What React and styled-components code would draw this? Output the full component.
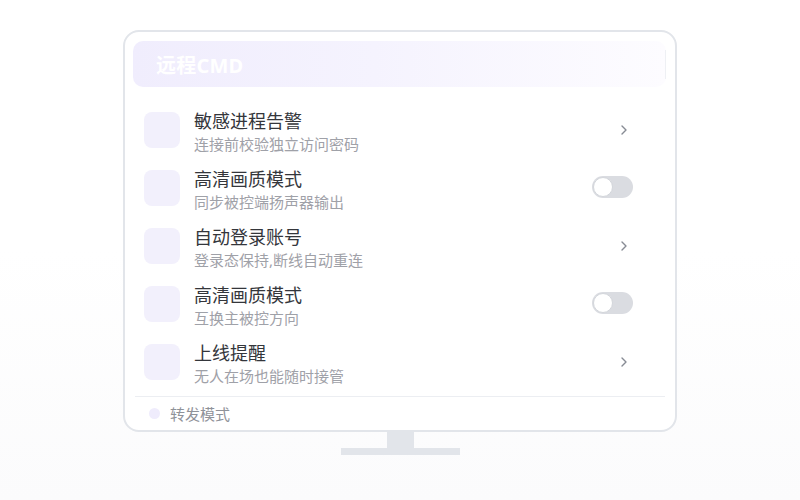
import styled, { createGlobalStyle } from "styled-components";

const GlobalStyle = createGlobalStyle`
  html, body {
    margin: 0;
    padding: 0;
  }
  body {
    font-family: "Noto Sans", "Noto Sans CJK SC", sans-serif;
    background: linear-gradient(180deg, #ffffff 0%, #ffffff 50%, #fbfbfc 100%);
    min-height: 500px;
  }
`;

const Page = styled.div`
  display: flex;
  flex-direction: column;
  align-items: center;
  padding-top: 30px;
  height: 470px;
`;

const Monitor = styled.div`
  width: 554px;
  box-sizing: border-box;
  border: 2px solid #e2e5ea;
  border-radius: 16px;
  background: #ffffff;
  padding: 9px 9px 0 8px;
  display: flex;
  flex-direction: column;
`;

const Header = styled.div`
  height: 46px;
  border-radius: 10px;
  background: linear-gradient(90deg, #f0edfd 0%, #f5f3fe 45%, #fdfcff 100%);
  display: flex;
  align-items: center;
  justify-content: space-between;
  padding-left: 23px;
`;

const HeaderTitle = styled.span`
  color: #ffffff;
  font-size: 20px;
  font-weight: 700;
  letter-spacing: 0.2px;
`;

const HeaderEdge = styled.span`
  width: 1px;
  height: 29px;
  background: #eef0f4;
`;

const List = styled.div`
  margin-top: 14px;
  display: flex;
  flex-direction: column;
`;

const Row = styled.div`
  height: 58px;
  display: flex;
  align-items: center;
  padding: 0 33px 0 11px;
`;

const IconBox = styled.div`
  width: 36px;
  height: 36px;
  border-radius: 8px;
  background: #f2f0fc;
  flex-shrink: 0;
`;

const Texts = styled.div`
  margin-left: 14px;
  margin-top: 4px;
  flex: 1;
  display: flex;
  flex-direction: column;
`;

const Title = styled.div`
  font-size: 18px;
  line-height: 23px;
  color: #34363b;
`;

const Sub = styled.div`
  font-size: 15px;
  line-height: 22px;
  color: #9fa1a8;
`;

const Control = styled.div`
  width: 42px;
  display: flex;
  justify-content: flex-end;
  align-items: center;
`;

const Chevron = styled.svg`
  margin-right: 6px;
`;

const Track = styled.div`
  width: 41px;
  height: 22px;
  margin-top: -2px;
  border-radius: 11px;
  background: #dadce1;
  display: flex;
  align-items: center;
  padding-left: 1px;
  box-sizing: border-box;
`;

const Knob = styled.div`
  width: 20px;
  height: 20px;
  box-sizing: border-box;
  border-radius: 50%;
  background: #ffffff;
  border: 1px solid #d3d6db;
`;

const Divider = styled.div`
  height: 1px;
  background: #eceef2;
  margin: 5px 1px 0 2px;
`;

const Footer = styled.div`
  height: 33px;
  display: flex;
  align-items: center;
  padding-left: 16px;
  gap: 10px;
`;

const Dot = styled.span`
  width: 11px;
  height: 11px;
  border-radius: 50%;
  background: #efecfc;
`;

const FooterText = styled.span`
  font-size: 15px;
  color: #8f9299;
`;

const Neck = styled.div`
  width: 27px;
  height: 16px;
  background: #e2e5ea;
`;

const Base = styled.div`
  width: 119px;
  height: 7px;
  background: #e2e5ea;
`;

const rows = [
  { title: "敏感进程告警", sub: "连接前校验独立访问密码", type: "arrow" },
  { title: "高清画质模式", sub: "同步被控端扬声器输出", type: "switch" },
  { title: "自动登录账号", sub: "登录态保持,断线自动重连", type: "arrow" },
  { title: "高清画质模式", sub: "互换主被控方向", type: "switch" },
  { title: "上线提醒", sub: "无人在场也能随时接管", type: "arrow" },
];

const Arrow = () => (
  <Chevron width="6" height="10" viewBox="0 0 6 10" fill="none">
    <path d="M1 1l4 4-4 4" stroke="#878b94" strokeWidth="1.4" strokeLinecap="round" strokeLinejoin="round" />
  </Chevron>
);

const Switch = () => (
  <Track>
    <Knob />
  </Track>
);

export default function App() {
  return (
    <Page>
      <GlobalStyle />
      <Monitor>
        <Header>
          <HeaderTitle>远程CMD</HeaderTitle>
          <HeaderEdge />
        </Header>
        <List>
          {rows.map((r, i) => (
            <Row key={i}>
              <IconBox />
              <Texts>
                <Title>{r.title}</Title>
                <Sub>{r.sub}</Sub>
              </Texts>
              <Control>{r.type === "arrow" ? <Arrow /> : <Switch />}</Control>
            </Row>
          ))}
        </List>
        <Divider />
        <Footer>
          <Dot />
          <FooterText>转发模式</FooterText>
        </Footer>
      </Monitor>
      <Neck />
      <Base />
    </Page>
  );
}
